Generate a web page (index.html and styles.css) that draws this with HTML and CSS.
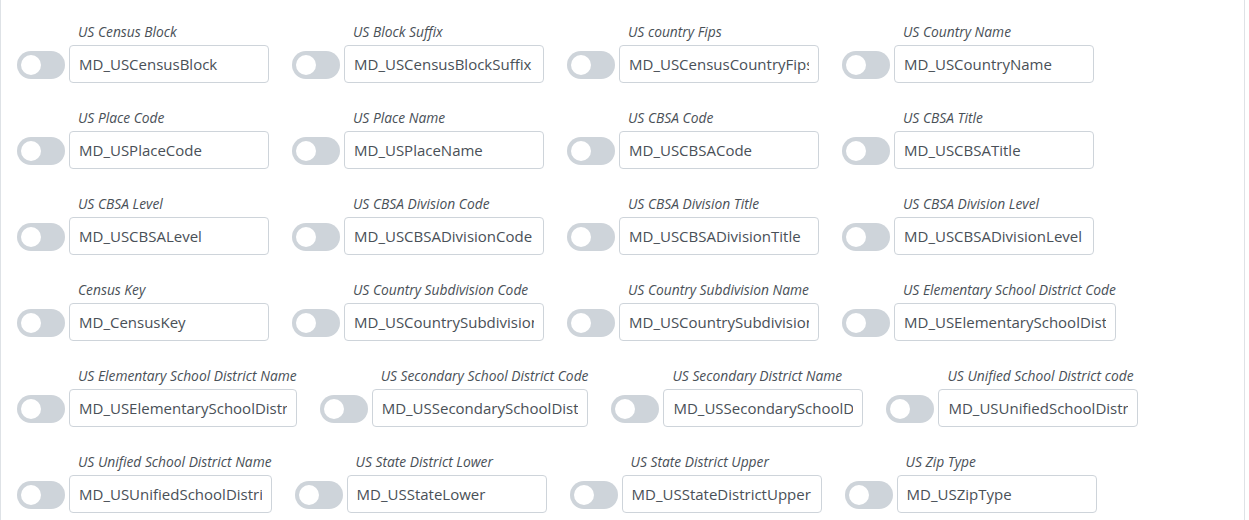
FILE: index.html
```html
<!DOCTYPE html>
<html lang="en">
<head>
<meta charset="utf-8">
<title>Field mapping</title>
<link rel="stylesheet" href="styles.css">
</head>
<body>
<div class="panel">
  <div class="row">
    <div class="field"><span class="switch"></span><div class="col"><label class="lbl">US Census Block</label><input class="inp" value="MD_USCensusBlock"></div></div>
    <div class="field"><span class="switch"></span><div class="col"><label class="lbl">US Block Suffix</label><input class="inp" value="MD_USCensusBlockSuffix"></div></div>
    <div class="field"><span class="switch"></span><div class="col"><label class="lbl">US country Fips</label><input class="inp" value="MD_USCensusCountryFips"></div></div>
    <div class="field"><span class="switch"></span><div class="col"><label class="lbl">US Country Name</label><input class="inp" value="MD_USCountryName"></div></div>
  </div>
  <div class="row">
    <div class="field"><span class="switch"></span><div class="col"><label class="lbl">US Place Code</label><input class="inp" value="MD_USPlaceCode"></div></div>
    <div class="field"><span class="switch"></span><div class="col"><label class="lbl">US Place Name</label><input class="inp" value="MD_USPlaceName"></div></div>
    <div class="field"><span class="switch"></span><div class="col"><label class="lbl">US CBSA Code</label><input class="inp" value="MD_USCBSACode"></div></div>
    <div class="field"><span class="switch"></span><div class="col"><label class="lbl">US CBSA Title</label><input class="inp" value="MD_USCBSATitle"></div></div>
  </div>
  <div class="row">
    <div class="field"><span class="switch"></span><div class="col"><label class="lbl">US CBSA Level</label><input class="inp" value="MD_USCBSALevel"></div></div>
    <div class="field"><span class="switch"></span><div class="col"><label class="lbl">US CBSA Division Code</label><input class="inp" value="MD_USCBSADivisionCode"></div></div>
    <div class="field"><span class="switch"></span><div class="col"><label class="lbl">US CBSA Division Title</label><input class="inp" value="MD_USCBSADivisionTitle"></div></div>
    <div class="field"><span class="switch"></span><div class="col"><label class="lbl">US CBSA Division Level</label><input class="inp" value="MD_USCBSADivisionLevel"></div></div>
  </div>
  <div class="row">
    <div class="field"><span class="switch"></span><div class="col"><label class="lbl">Census Key</label><input class="inp" value="MD_CensusKey"></div></div>
    <div class="field"><span class="switch"></span><div class="col"><label class="lbl">US Country Subdivision Code</label><input class="inp" value="MD_USCountrySubdivisionCode"></div></div>
    <div class="field"><span class="switch"></span><div class="col"><label class="lbl">US Country Subdivision Name</label><input class="inp" value="MD_USCountrySubdivisionName"></div></div>
    <div class="field"><span class="switch"></span><div class="col"><label class="lbl">US Elementary School District Code</label><input class="inp" value="MD_USElementarySchoolDistrictCode"></div></div>
  </div>
  <div class="row">
    <div class="field"><span class="switch"></span><div class="col"><label class="lbl">US Elementary School District Name</label><input class="inp" value="MD_USElementarySchoolDistrictName"></div></div>
    <div class="field"><span class="switch"></span><div class="col"><label class="lbl">US Secondary School District Code</label><input class="inp" value="MD_USSecondarySchoolDistrictCode"></div></div>
    <div class="field"><span class="switch"></span><div class="col"><label class="lbl">US Secondary District Name</label><input class="inp" value="MD_USSecondarySchoolDistrictName"></div></div>
    <div class="field"><span class="switch"></span><div class="col"><label class="lbl">US Unified School District code</label><input class="inp" value="MD_USUnifiedSchoolDistrictCode"></div></div>
  </div>
  <div class="row">
    <div class="field"><span class="switch"></span><div class="col"><label class="lbl">US Unified School District Name</label><input class="inp" value="MD_USUnifiedSchoolDistrictName"></div></div>
    <div class="field"><span class="switch"></span><div class="col"><label class="lbl">US State District Lower</label><input class="inp" value="MD_USStateLower"></div></div>
    <div class="field"><span class="switch"></span><div class="col"><label class="lbl">US State District Upper</label><input class="inp" value="MD_USStateDistrictUpper"></div></div>
    <div class="field"><span class="switch"></span><div class="col"><label class="lbl">US Zip Type</label><input class="inp" value="MD_USZipType"></div></div>
  </div>
</div>
</body>
</html>
```
FILE: styles.css
```css
html, body {
  margin: 0;
  padding: 0;
  background: #ffffff;
}
body {
  font-family: "Open Sans", "Noto Sans", sans-serif;
}
.panel {
  width: 1245px;
  box-sizing: border-box;
  height: 520px;
  border-left: 1px solid #dee2e6;
  border-right: 1px solid #dee2e6;
  padding: 22px 0 0 16px;
  display: flex;
  flex-direction: column;
  gap: 25px;
}
.row {
  display: flex;
  gap: 23px;
}
.field {
  display: flex;
  align-items: flex-end;
  gap: 4px;
}
.switch {
  position: relative;
  width: 48px;
  height: 28px;
  border-radius: 14px;
  background: #ced4da;
  margin-bottom: 4px;
  flex: none;
}
.switch::after {
  content: "";
  position: absolute;
  left: 4px;
  top: 4px;
  width: 20px;
  height: 20px;
  border-radius: 50%;
  background: #ffffff;
}
.col {
  display: flex;
  flex-direction: column;
  align-items: flex-start;
  min-width: 200px;
}
.lbl {
  font-style: italic;
  font-size: 13.8px;
  line-height: 20px;
  color: #495057;
  padding-left: 9px;
  margin-bottom: 3px;
  white-space: nowrap;
}
.inp {
  box-sizing: border-box;
  width: 0;
  min-width: 100%;
  height: 38px;
  border: 1px solid #ced4da;
  border-radius: 4px;
  padding: 0 9px;
  font-family: "Open Sans", "Noto Sans", sans-serif;
  font-size: 15px;
  color: #495057;
  background: #fff;
  outline: none;
}
```
